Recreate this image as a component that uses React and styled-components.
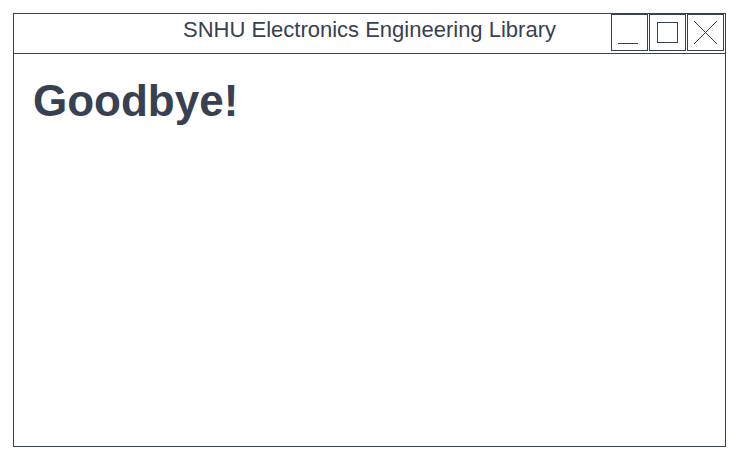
import React from "react";
import styled, { createGlobalStyle } from "styled-components";

const GlobalStyle = createGlobalStyle`
  * {
    box-sizing: border-box;
  }

  body {
    margin: 0;
    background: #ffffff;
    font-family: "Liberation Sans", Arial, sans-serif;
    color: #374151;
  }
`;

const Page = styled.div`
  padding: 13px 16px 21px 13px;
`;

const Window = styled.div`
  height: 434px;

  display: flex;
  flex-direction: column;

  border: 1px solid #374151;
`;

const TitleBar = styled.div`
  position: relative;
  height: 40px;

  display: flex;
  align-items: flex-start;
  justify-content: center;

  padding-top: 4px;

  border-bottom: 1px solid #374151;
`;

const Title = styled.div`
  font-size: 22px;
  line-height: 24px;
  color: #374151;
`;

const Controls = styled.div`
  position: absolute;
  top: 0;
  right: 1px;

  display: flex;
  gap: 1px;
`;

const ControlButton = styled.button`
  width: 37px;
  height: 37px;
  padding: 0;

  display: flex;
  align-items: center;
  justify-content: center;

  background: #ffffff;
  border: 1px solid #374151;
  border-radius: 0;
  cursor: pointer;
`;

const Content = styled.main`
  flex: 1;
  padding: 22px 19px;
`;

const Heading = styled.h1`
  margin: 0;

  font-size: 44px;
  line-height: 50px;
  font-weight: 700;
  color: #374151;
`;

function MinimizeIcon() {
  return (
    <svg width="35" height="35" viewBox="0 0 35 35">
      <line x1="6" y1="28.5" x2="26" y2="28.5" stroke="#374151" strokeWidth="1" />
    </svg>
  );
}

function MaximizeIcon() {
  return (
    <svg width="35" height="35" viewBox="0 0 35 35">
      <rect x="7.5" y="7.5" width="20" height="20" fill="none" stroke="#374151" strokeWidth="1" />
    </svg>
  );
}

function CloseIcon() {
  return (
    <svg width="35" height="35" viewBox="0 0 35 35">
      <path d="M6 6 L29 29 M29 6 L6 29" stroke="#374151" strokeWidth="1" />
    </svg>
  );
}

function App() {
  return (
    <Page>
      <GlobalStyle />
      <Window>
        <TitleBar>
          <Title>SNHU Electronics Engineering Library</Title>
          <Controls>
            <ControlButton aria-label="Minimize">
              <MinimizeIcon />
            </ControlButton>
            <ControlButton aria-label="Maximize">
              <MaximizeIcon />
            </ControlButton>
            <ControlButton aria-label="Close">
              <CloseIcon />
            </ControlButton>
          </Controls>
        </TitleBar>
        <Content>
          <Heading>Goodbye!</Heading>
        </Content>
      </Window>
    </Page>
  );
}

export default App;
